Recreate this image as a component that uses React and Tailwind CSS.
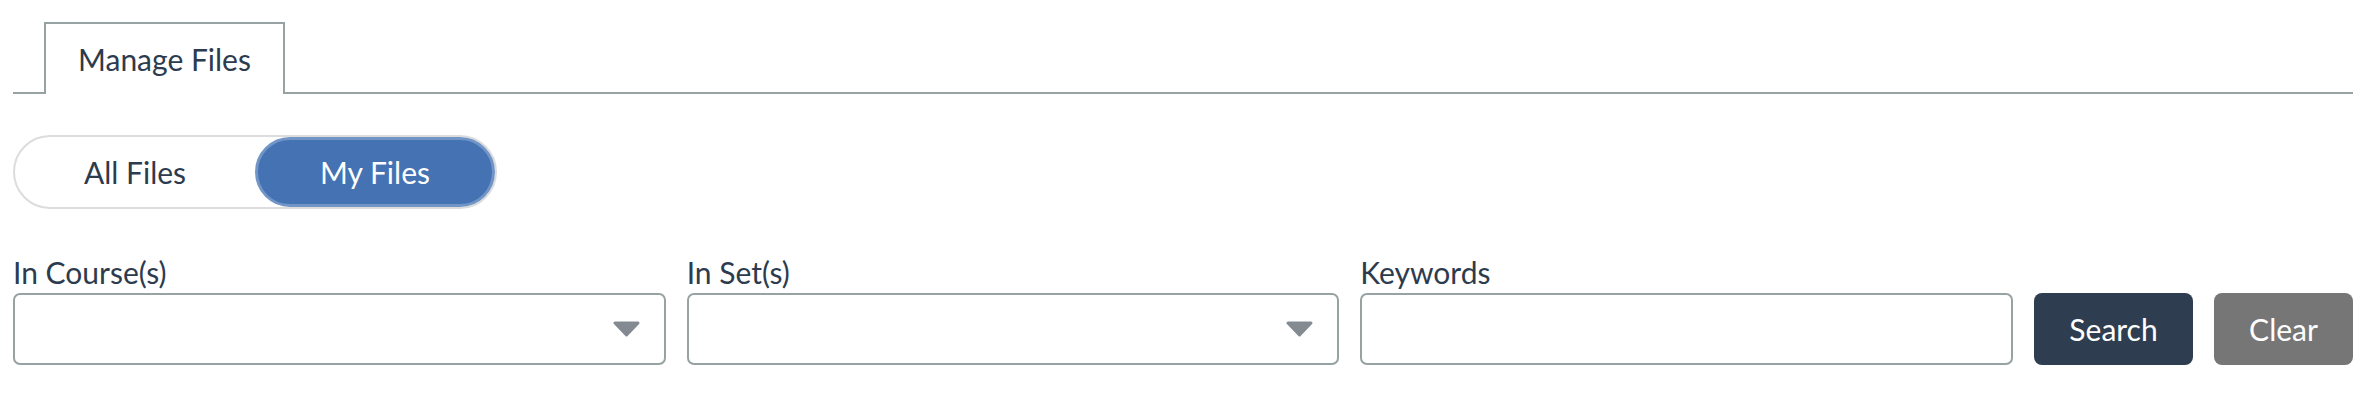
import React from 'react'

const borderGray = 'border-[#97a2a2]'

function Caret() {
  return (
    <svg width="27" height="16" viewBox="0 0 27 16" className="shrink-0">
      <polygon
        points="2,2 25,2 13.5,14"
        fill="#848a91"
        stroke="#848a91"
        strokeWidth="3"
        strokeLinejoin="round"
      />
    </svg>
  )
}

function Field({ label, select }) {
  return (
    <div className="flex-1 min-w-0 flex flex-col">
      <label className="leading-[36px] mb-[3px]">{label}</label>
      <div
        className={`h-[72px] rounded-[7px] border-2 ${borderGray} bg-white flex items-center justify-end pr-[24px]`}
      >
        {select && <Caret />}
      </div>
    </div>
  )
}

export default function App() {
  return (
    <div className="min-h-[412px] bg-white pl-[13px] pr-[9px] pt-[22px] font-['Lato',_'Liberation_Sans',_sans-serif] text-[30px] text-[#2d3b4e]">
      {/* Tabs */}
      <div className={`flex border-b-2 ${borderGray} pl-[31px]`}>
        <div
          className={`-mb-[2px] h-[72px] w-[241px] border-2 border-b-0 ${borderGray} bg-white flex items-center justify-center leading-[36px]`}
        >
          Manage Files
        </div>
      </div>

      {/* All / My toggle */}
      <div className="mt-[41px] w-[484px] h-[74px] rounded-full border-2 border-[#dcdcdc] flex items-stretch">
        <button className="flex-1 flex items-center justify-center leading-[36px]">All Files</button>
        <button className="w-[240px] rounded-full bg-[#4472b2] border-[3px] border-[#7195c7] text-white flex items-center justify-center leading-[36px]">
          My Files
        </button>
      </div>

      {/* Filters */}
      <div className="mt-[45px] flex items-end gap-[21px]">
        <Field label="In Course(s)" select />
        <Field label="In Set(s)" select />
        <Field label="Keywords" />
        <button className="w-[159px] h-[72px] rounded-[8px] bg-[#2f3d50] text-white leading-[36px]">
          Search
        </button>
        <button className="w-[139px] h-[72px] rounded-[8px] bg-[#767676] text-white leading-[36px]">
          Clear
        </button>
      </div>
    </div>
  )
}
